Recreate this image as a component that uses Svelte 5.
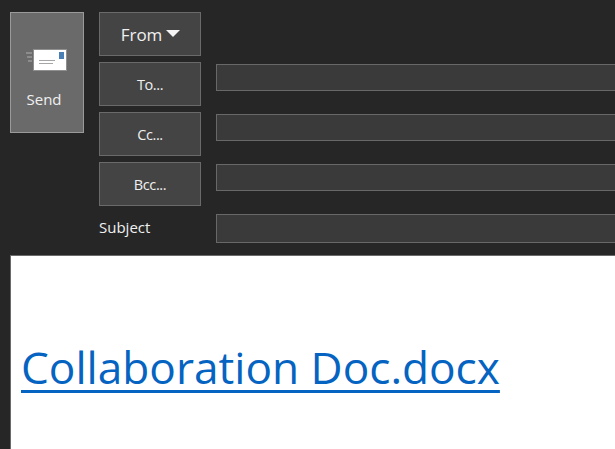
<script>
  const recipients = ['To...', 'Cc...', 'Bcc...'];
</script>

<div class="window">
  <div class="header">
    <button class="send">
      <svg width="44" height="24" viewBox="0 0 44 24">
        <rect x="1" y="3" width="6" height="2" fill="#8c8c8c" />
        <rect x="2" y="7" width="5" height="2" fill="#8c8c8c" />
        <rect x="3" y="11" width="4" height="2" fill="#8c8c8c" />
        <rect x="8.5" y="0.5" width="33" height="21" fill="#fff" stroke="#8f8f8f" />
        <rect x="34" y="3" width="5" height="7" fill="#4a7fb5" />
        <rect x="14" y="11" width="16" height="1" fill="#a6a6a6" />
        <rect x="14" y="14" width="14" height="1" fill="#a6a6a6" />
      </svg>
      <span>Send</span>
    </button>

    <div class="fields">
      <div class="row first">
        <button class="field-btn from">From <i class="caret"></i></button>
      </div>
      {#each recipients as label}
        <div class="row">
          <button class="field-btn">{label}</button>
          <div class="input"></div>
        </div>
      {/each}
      <div class="row subject">
        <span class="subject-label">Subject</span>
        <div class="input tall"></div>
      </div>
    </div>
  </div>

  <div class="body">
    <a href="#doc" class="attachment">Collaboration Doc.docx</a>
  </div>
</div>

<style>
  :global(body) { background: #262626; }

  .window {
    width: 615px;
    height: 449px;
    overflow: hidden;
    display: flex;
    flex-direction: column;
    background: #262626;
    font-family: "Open Sans", "Noto Sans", sans-serif;
    color: #f0f0f0;
  }

  .header {
    display: flex;
    gap: 15px;
    height: 255px;
    padding: 12px 0 0 10px;
    box-sizing: border-box;
    flex: none;
  }

  button {
    font-family: inherit;
    color: #f0f0f0;
    cursor: pointer;
    box-sizing: border-box;
    padding: 0;
  }

  .send {
    width: 74px;
    height: 121px;
    flex: none;
    background: #6a6a6a;
    border: 1px solid #9a9a9a;
    display: flex;
    flex-direction: column;
    align-items: center;
    font-size: 15px;
    padding-top: 36px;
  }
  .send svg { display: block; margin-bottom: 16px; }
  .send span { line-height: 20px; margin-right: 6px; }

  .fields { flex: 1; display: flex; flex-direction: column; gap: 6px; min-width: 0; }
  .row { display: flex; align-items: center; gap: 15px; height: 44px; flex: none; }

  .field-btn {
    width: 102px;
    height: 44px;
    flex: none;
    background: #444444;
    border: 1px solid #6a6a6a;
    font-size: 14.5px;
    letter-spacing: -0.4px;
  }
  .from {
    font-size: 17px;
    letter-spacing: 0;
    display: flex;
    align-items: center;
    justify-content: center;
    gap: 4px;
    padding-left: 1px;
  }
  .caret {
    display: block;
    width: 0;
    height: 0;
    border-left: 7px solid transparent;
    border-right: 7px solid transparent;
    border-top: 7px solid #f4f4f4;
    margin-top: -2px;
  }

  .input {
    flex: 1;
    height: 27px;
    margin-right: -2px;
    margin-top: -13px;
    background: #3a3a3a;
    border: 1px solid #686868;
    box-sizing: border-box;
  }
  .input.tall { height: 29px; margin-top: 0; }

  .subject { height: 29px; margin-top: 2px; }
  .subject-label { width: 102px; flex: none; font-size: 15px; line-height: 20px; margin-top: -4px; }

  .body {
    flex: 1;
    margin-left: 10px;
    background: #fff;
    border-left: 1px solid #6a6a6a;
    border-top: 1px solid #6a6a6a;
    padding: 83px 0 0 10px;
    box-sizing: border-box;
  }
  .attachment {
    font-size: 44.2px;
    line-height: 56px;
    color: #0563c1;
    text-decoration: underline;
    text-decoration-thickness: 3px;
    text-underline-offset: 6px;
    text-decoration-skip-ink: none;
    white-space: nowrap;
  }
</style>
